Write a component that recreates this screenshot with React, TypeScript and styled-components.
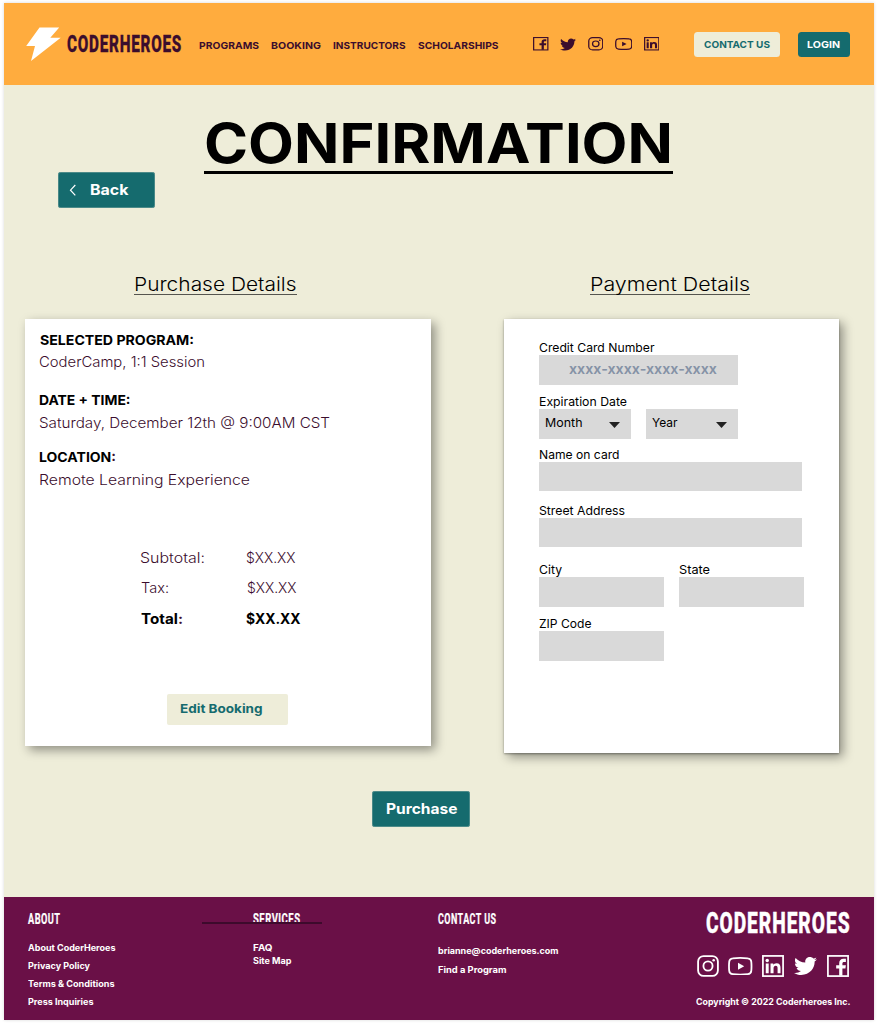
import React, { useLayoutEffect, useRef, useState } from 'react';
import styled, { createGlobalStyle } from 'styled-components';
import { FaTwitter } from 'react-icons/fa';

const color = {
  orange: '#ffac3e',
  cream: '#eeedd9',
  teal: '#156b6e',
  plum: '#3b0d2d',
  wine: '#6a1047',
  field: '#d9d9d9',
};

const GlobalStyle = createGlobalStyle`
  * { box-sizing: border-box; }
  body {
    margin: 0;
    background: #fff;
    font-family: Inter, "Open Sans", sans-serif;
    color: #000;
  }
  h1, h2, h3, p { margin: 0; font-weight: inherit; }
`;

/* ---------- text set to a fixed measure ---------- */

const Measure = styled.span<{
  $w: number; $size: number; $weight: number; $color: string; $lh: number; $ml: number; $display: boolean;
}>`
  display: block;
  flex: none;
  width: ${p => p.$w}px;
  height: ${p => p.$lh}px;
  line-height: ${p => p.$lh}px;
  margin-left: ${p => p.$ml}px;
  font-size: ${p => p.$size}px;
  font-weight: ${p => p.$weight};
  color: ${p => p.$color};
  font-family: ${p => (p.$display ? 'Roboto, sans-serif' : 'Inter, sans-serif')};
  letter-spacing: ${p => (p.$display ? '0.05em' : 'normal')};
  -webkit-text-stroke: ${p => (p.$display ? `${p.$size * 0.016}px ${p.$color}` : '0')};
  text-align: left;
  white-space: nowrap;
`;

const Run = styled.span`
  display: inline-block;
  vertical-align: top;
  transform-origin: 0 50%;
`;

type TextProps = {
  w: number; size: number; weight?: number; tone?: string; lh?: number; ml?: number;
  display?: boolean; children: React.ReactNode;
};

function Text({ w, size, weight = 400, tone = '#000', lh = 20, ml = 0, display = false, children }: TextProps) {
  const ref = useRef<HTMLSpanElement>(null);
  const [scale, setScale] = useState(1);
  useLayoutEffect(() => {
    if (ref.current && ref.current.offsetWidth) {
      const prev = ref.current.style.transform;
      ref.current.style.transform = 'none';
      const natural = ref.current.getBoundingClientRect().width;
      ref.current.style.transform = prev;
      setScale(w / natural);
    }
  }, [w]);
  return (
    <Measure $w={w} $size={size} $weight={weight} $color={tone} $lh={lh} $ml={ml} $display={display}>
      <Run ref={ref} style={{ transform: `scaleX(${scale})` }}>{children}</Run>
    </Measure>
  );
}

/* ---------- icons ---------- */

const IconLink = styled.a<{ $w: number; $h: number; $ml?: number }>`
  display: flex;
  flex: none;
  width: ${p => p.$w}px;
  height: ${p => p.$h}px;
  margin-left: ${p => p.$ml ?? 0}px;
  color: inherit;
  svg { width: 100%; height: 100%; display: block; }
`;

const Facebook = () => (
  <svg viewBox="0 0 24 24" preserveAspectRatio="none" fill="none">
    <rect x="1" y="1" width="22" height="22" stroke="currentColor" strokeWidth="1.9" />
    <path fill="currentColor" d="M13.3 22.5v-7.800H10v-3.400h3.300V9c0-3 1.800-4.800 4.700-4.800h2.600v3.300h-2c-1.300 0-1.800.6-1.800 1.700v2.100h3.800l-.5 3.400h-3.300v7.800z" />
  </svg>
);

const Instagram = () => (
  <svg viewBox="0 0 24 24" preserveAspectRatio="none" fill="none" stroke="currentColor" strokeWidth="2">
    <rect x="1.2" y="1.2" width="21.6" height="21.6" rx="6" />
    <circle cx="12" cy="12" r="5" />
    <circle cx="18.2" cy="5.8" r="1.4" fill="currentColor" stroke="none" />
  </svg>
);

const Youtube = () => (
  <svg viewBox="0 0 26 20" preserveAspectRatio="none" fill="none">
    <path stroke="currentColor" strokeWidth="1.9" d="M5 1.5Q13 .6 21 1.5Q24.4 1.8 24.7 5Q25.2 10 24.7 15Q24.4 18.2 21 18.5Q13 19.4 5 18.5Q1.600 18.2 1.300 15Q.8 10 1.300 5Q1.600 1.800 5 1.500Z" />
    <path fill="currentColor" d="M10.600 6.300v7.400l6.600-3.700z" />
  </svg>
);

const Linkedin = () => (
  <svg viewBox="0 0 24 24" preserveAspectRatio="none" fill="none">
    <rect x="1" y="1" width="22" height="22" stroke="currentColor" strokeWidth="1.9" />
    <circle cx="5.700" cy="6" r="1.900" fill="currentColor" />
    <path fill="currentColor" d="M4.100 9.200h3.200v10.700H4.100zM9.300 9.200h3v1.500c.6-1 1.800-1.800 3.500-1.800 3.300 0 4.400 2 4.400 5.200v5.800H17v-5.300c0-1.600-.4-2.800-1.900-2.800-1.700 0-2.500 1.100-2.500 2.900v5.200H9.300z" />
  </svg>
);

/* ---------- page frame ---------- */

const Page = styled.div`
  width: 870.500px;
  height: 1017px;
  margin: 3.300px 0 0 3.600px;
  display: flex;
  flex-direction: column;
  background: ${color.cream};
  box-shadow: 0 0 3px rgba(0, 0, 0, 0.16);
`;

const Viewport = styled.div`
  height: 1024px;
  overflow: hidden;
  display: flex;
  align-items: flex-start;
`;

const Header = styled.header`
  height: 81.700px;
  flex: none;
  display: flex;
  align-items: center;
  padding: 0 0 0 22.600px;
  background: ${color.orange};
  color: ${color.plum};
`;

const Bolt = styled.svg`
  width: 35px;
  height: 34px;
  flex: none;
`;

const Nav = styled.nav`
  display: flex;
  gap: 12px;
  margin: 3px 0 0 17px;
`;

const Social = styled.div<{ $ml?: number; $mt?: number }>`
  display: flex;
  align-items: center;
  margin-left: ${p => p.$ml ?? 0}px;
  margin-top: ${p => p.$mt ?? 0}px;
`;

const Button = styled.button<{
  $w: number; $h: number; $bg: string; $ml?: number; $mt?: number; $pad: number; $lift?: number; $r?: number; $edge?: string;
}>`
  width: ${p => p.$w}px;
  height: ${p => p.$h}px;
  flex: none;
  margin: ${p => p.$mt ?? 0}px 0 0 ${p => p.$ml ?? 0}px;
  padding: 0 0 ${p => p.$lift ?? 0}px ${p => p.$pad}px;
  display: flex;
  align-items: center;
  justify-content: flex-start;
  border: 0;
  border-radius: ${p => p.$r ?? 3}px;
  background: ${p => p.$bg};
  box-shadow: inset 0 0 0 0.700px ${p => p.$edge ?? 'transparent'};
`;

/* ---------- main ---------- */

const Main = styled.main`
  height: 812px;
  flex: none;
  display: flex;
  flex-direction: column;
`;

const TitleRow = styled.div`
  height: 123px;
  display: flex;
  align-items: flex-start;
`;

const Title = styled.h1`
  margin: 29px 0 0 48.500px;
  height: 60px;
  border-bottom: 3px solid #000;
`;

const Chevron = styled.svg`
  width: 8px;
  height: 12px;
  flex: none;
`;

const Columns = styled.div`
  display: flex;
  align-items: flex-start;
  height: 583px;
  padding: 66px 0 0 21.400px;
`;

const Column = styled.section<{ $w: number; $ml?: number }>`
  width: ${p => p.$w}px;
  margin-left: ${p => p.$ml ?? 0}px;
  flex: none;
`;

const SectionTitle = styled.h2<{ $w: number; $ml: number }>`
  width: ${p => p.$w}px;
  height: 21px;
  margin: 0 0 24.500px ${p => p.$ml}px;
  border-bottom: 1.500px solid #55554f;
`;

const Card = styled.div<{ $h: number; $pad: string; $sharp?: boolean }>`
  height: ${p => p.$h}px;
  padding: ${p => p.$pad};
  background: #fff;
  box-shadow: 4px 4px 10px rgba(0, 0, 0, 0.4)${p => (p.$sharp ? ', 0 1px 2px rgba(0, 0, 0, 0.35)' : '')};
`;

const Detail = styled.div<{ $mt?: number; $gap: number }>`
  display: flex;
  flex-direction: column;
  gap: ${p => p.$gap}px;
  margin-top: ${p => p.$mt ?? 0}px;
`;

const Totals = styled.div`
  margin: 58px 0 0 101px;
  display: grid;
  grid-template-columns: 106px auto;
  grid-template-rows: 29.700px 31.300px 20px;
`;

const Tint = styled.span`
  color: ${color.plum};
`;

/* ---------- payment form ---------- */

const FieldGroup = styled.label<{ $mt?: number }>`
  display: block;
  margin-top: ${p => p.$mt ?? 0}px;
`;

const FieldRow = styled.div<{ $gap: number; $mt?: number }>`
  display: flex;
  gap: ${p => p.$gap}px;
  margin-top: ${p => p.$mt ?? 0}px;
`;

const Field = styled.div<{ $w: number; $pad?: number; $lift?: number }>`
  width: ${p => p.$w}px;
  height: 29.500px;
  display: flex;
  align-items: center;
  padding: 0 0 ${p => p.$lift ?? 0}px ${p => p.$pad ?? 0}px;
  background: ${color.field};
`;

const Caret = styled.svg<{ $ml: number }>`
  width: 11px;
  height: 6px;
  margin: 4px 0 0 ${p => p.$ml}px;
`;

/* ---------- footer ---------- */

const Footer = styled.footer`
  flex: 1;
  display: flex;
  align-items: flex-start;
  background: ${color.wine};
  color: #fff;
`;

const FooterCol = styled.div<{ $ml: number; $w: number }>`
  width: ${p => p.$w}px;
  margin-left: ${p => p.$ml}px;
  padding-top: 14.700px;
  flex: none;
`;

const Links = styled.div<{ $mt: number; $gap: number }>`
  display: flex;
  flex-direction: column;
  gap: ${p => p.$gap}px;
  margin-top: ${p => p.$mt}px;
`;

const RuledHeading = styled.div`
  position: relative;
  &::after {
    content: '';
    position: absolute;
    left: -51px;
    top: 10.800px;
    width: 120.500px;
    height: 1.500px;
    background: #3d0a2c;
  }
`;

const Brand = styled.div`
  width: 154px;
  margin-left: 138.500px;
  padding-top: 11px;
  flex: none;
`;

const foot = { size: 8.800, weight: 700, tone: '#fff', lh: 12 };
const nav = { size: 9.600, weight: 700, tone: color.plum };
const heading = { size: 13.300, weight: 700 };
const value = { size: 14.200, weight: 300, tone: color.plum };
const label = { size: 12, lh: 14 };

export default function App() {
  return (
    <Viewport>
      <GlobalStyle />
      <Page>
        <Header>
          <Bolt viewBox="0 0 35 34">
            <path fill="#fff" d="M13.500 0.400H33.200L24.300 10.700H34.700L5 34L9 19H0.200Z" />
          </Bolt>
          <Text w={115} size={23.300} weight={800} lh={26} ml={6} tone={color.plum} display>CODERHEROES</Text>
          <Nav>
            <Text w={60} {...nav}>PROGRAMS</Text>
            <Text w={50} {...nav}>BOOKING</Text>
            <Text w={72.500} {...nav}>INSTRUCTORS</Text>
            <Text w={80.500} {...nav}>SCHOLARSHIPS</Text>
          </Nav>
          <Social $ml={35}>
            <IconLink $w={15.500} $h={13.500}><Facebook /></IconLink>
            <IconLink $w={16} $h={15} $ml={11.500}><FaTwitter preserveAspectRatio="none" /></IconLink>
            <IconLink $w={15.500} $h={13.500} $ml={11.500}><Instagram /></IconLink>
            <IconLink $w={17.500} $h={12} $ml={11.500}><Youtube /></IconLink>
            <IconLink $w={15.500} $h={13.500} $ml={11.500}><Linkedin /></IconLink>
          </Social>
          <Button $w={86} $h={24.500} $bg={color.cream} $ml={34.700} $mt={1} $pad={9.800} $r={3.500}>
            <Text w={66} {...nav} tone={color.teal}>CONTACT US</Text>
          </Button>
          <Button $w={52.500} $h={24.500} $bg={color.teal} $ml={17.800} $mt={1} $pad={9.700} $r={3.500}>
            <Text w={33} {...nav} tone="#fff">LOGIN</Text>
          </Button>
        </Header>

        <Main>
          <TitleRow>
            <Button $w={97.500} $h={35.500} $bg={color.teal} $ml={54.400} $mt={87.500} $pad={11} $lift={1} $edge="#5f9693">
              <Chevron viewBox="0 0 8 12">
                <path d="M6.300 1L1.500 6.200L6.300 11.400" fill="none" stroke="#fff" strokeWidth="1.200" />
              </Chevron>
              <Text w={38.500} size={14.600} weight={700} tone="#fff" ml={13.400}>Back</Text>
            </Button>
            <Title>
              <Text w={469} size={54.500} weight={700} lh={58}>CONFIRMATION</Text>
            </Title>
          </TitleRow>

          <Columns>
            <Column $w={406}>
              <SectionTitle $w={162.500} $ml={109.500}>
                <Text w={162.500} size={18.600} weight={300}>Purchase Details</Text>
              </SectionTitle>
              <Card $h={427} $pad="10.300px 0 0 14.500px">
                <Detail $gap={2.200}>
                  <Text w={154} ml={0.800} {...heading}>SELECTED PROGRAM:</Text>
                  <Text w={166} {...value}>CoderCamp, 1:1 Session</Text>
                </Detail>
                <Detail $mt={18.500} $gap={2.700}>
                  <Text w={91.500} {...heading}>DATE + TIME:</Text>
                  <Text w={291} {...value}>Saturday, December 12th @ 9:00AM CST</Text>
                </Detail>
                <Detail $mt={14.300} $gap={3}>
                  <Text w={77} {...heading}>LOCATION<Tint>:</Tint></Text>
                  <Text w={211} {...value}>Remote Learning Experience</Text>
                </Detail>
                <Totals>
                  <Text w={65} {...value}>Subtotal:</Text>
                  <Text w={49.500} {...value}>$XX.XX</Text>
                  <Text w={28} ml={0.300} {...value}>Tax:</Text>
                  <Text w={49.500} ml={0.500} {...value}>$XX.XX</Text>
                  <Text w={42} ml={0.300} size={14.200} weight={700}>Total<Tint>:</Tint></Text>
                  <Text w={54.500} size={14.200} weight={700}>$XX.XX</Text>
                </Totals>
                <Button $w={121.500} $h={31} $bg={color.cream} $ml={127.500} $mt={64.800} $pad={13} $lift={2} $r={2}>
                  <Text w={82.500} size={12.400} weight={700} tone={color.teal}>Edit Booking</Text>
                </Button>
              </Card>
            </Column>

            <Column $w={335.500} $ml={72.700}>
              <SectionTitle $w={160} $ml={86.300}>
                <Text w={160} size={18.600} weight={300}>Payment Details</Text>
              </SectionTitle>
              <Card $h={434} $pad="21.800px 0 0 35.500px" $sharp>
                <FieldGroup>
                  <Text w={115.500} {...label}>Credit Card Number</Text>
                  <Field $w={199} $pad={29.800} $lift={2}>
                    <Text w={148} size={14.600} weight={600} tone="#8592a6">xxxx-xxxx-xxxx-xxxx</Text>
                  </Field>
                </FieldGroup>
                <FieldGroup $mt={10.300}>
                  <Text w={88} {...label}>Expiration Date</Text>
                  <FieldRow $gap={14.500}>
                    <Field $w={92.300} $pad={6} $lift={2.500}>
                      <Text w={37.500} size={12}>Month</Text>
                      <Caret $ml={26.200} viewBox="0 0 11 6"><path fill="#222" d="M0 0H11L5.500 6Z" /></Caret>
                    </Field>
                    <Field $w={92.300} $pad={6} $lift={2.500}>
                      <Text w={25.500} size={12}>Year</Text>
                      <Caret $ml={38.200} viewBox="0 0 11 6"><path fill="#222" d="M0 0H11L5.500 6Z" /></Caret>
                    </Field>
                  </FieldRow>
                </FieldGroup>
                <FieldGroup $mt={9}>
                  <Text w={80.500} {...label}>Name on card</Text>
                  <Field $w={263.200} />
                </FieldGroup>
                <FieldGroup $mt={12.800}>
                  <Text w={86} {...label}>Street Address</Text>
                  <Field $w={263.200} />
                </FieldGroup>
                <FieldRow $gap={14.500} $mt={16}>
                  <FieldGroup>
                    <Text w={23} {...label}>City</Text>
                    <Field $w={125} />
                  </FieldGroup>
                  <FieldGroup>
                    <Text w={31} {...label}>State</Text>
                    <Field $w={125} />
                  </FieldGroup>
                </FieldRow>
                <FieldGroup $mt={10.600}>
                  <Text w={52.500} {...label}>ZIP Code</Text>
                  <Field $w={125} />
                </FieldGroup>
              </Card>
            </Column>
          </Columns>

          <Button $w={97.500} $h={35.500} $bg={color.teal} $ml={368.600} $mt={0.500} $pad={13.800} $lift={1} $edge="#5f9693">
            <Text w={71.500} size={14.600} weight={700} tone="#fff">Purchase</Text>
          </Button>
        </Main>

        <Footer>
          <FooterCol $ml={24} $w={174.400}>
            <Text w={32.500} size={14.200} weight={700} tone="#fff" lh={14} display>ABOUT</Text>
            <Links $mt={16} $gap={6.100}>
              <Text w={87.500} {...foot}>About CoderHeroes</Text>
              <Text w={62} {...foot}>Privacy Policy</Text>
              <Text w={86.500} {...foot}>Terms &amp; Conditions</Text>
              <Text w={65.500} {...foot}>Press Inquiries</Text>
            </Links>
          </FooterCol>
          <FooterCol $ml={51} $w={120}>
            <RuledHeading>
              <Text w={47.500} size={14.200} weight={700} tone="#fff" lh={14} display>SERVICES</Text>
            </RuledHeading>
            <Links $mt={16} $gap={1.500}>
              <Text w={19.500} {...foot}>FAQ</Text>
              <Text w={38.500} {...foot}>Site Map</Text>
            </Links>
          </FooterCol>
          <FooterCol $ml={65} $w={120}>
            <Text w={58.500} size={14.200} weight={700} tone="#fff" lh={14} display>CONTACT US</Text>
            <Links $mt={19} $gap={6.900}>
              <Text w={120.500} {...foot}>brianne@coderheroes.com</Text>
              <Text w={68.500} {...foot}>Find a Program</Text>
            </Links>
          </FooterCol>
          <Brand>
            <Text w={144.500} ml={9.500} size={29} weight={800} tone="#fff" lh={30} display>CODERHEROES</Text>
            <Social $mt={17} $ml={0.700}>
              <IconLink $w={22} $h={22}><Instagram /></IconLink>
              <IconLink $w={24.500} $h={18.500} $ml={9}><Youtube /></IconLink>
              <IconLink $w={22} $h={22} $ml={9.500}><Linkedin /></IconLink>
              <IconLink $w={23} $h={22} $ml={9.500}><FaTwitter preserveAspectRatio="none" /></IconLink>
              <IconLink $w={22} $h={22} $ml={10}><Facebook /></IconLink>
            </Social>
            <Links $mt={19} $gap={0}>
              <Text w={154.500} {...foot}>Copyright © 2022 Coderheroes Inc.</Text>
            </Links>
          </Brand>
        </Footer>
      </Page>
    </Viewport>
  );
}
